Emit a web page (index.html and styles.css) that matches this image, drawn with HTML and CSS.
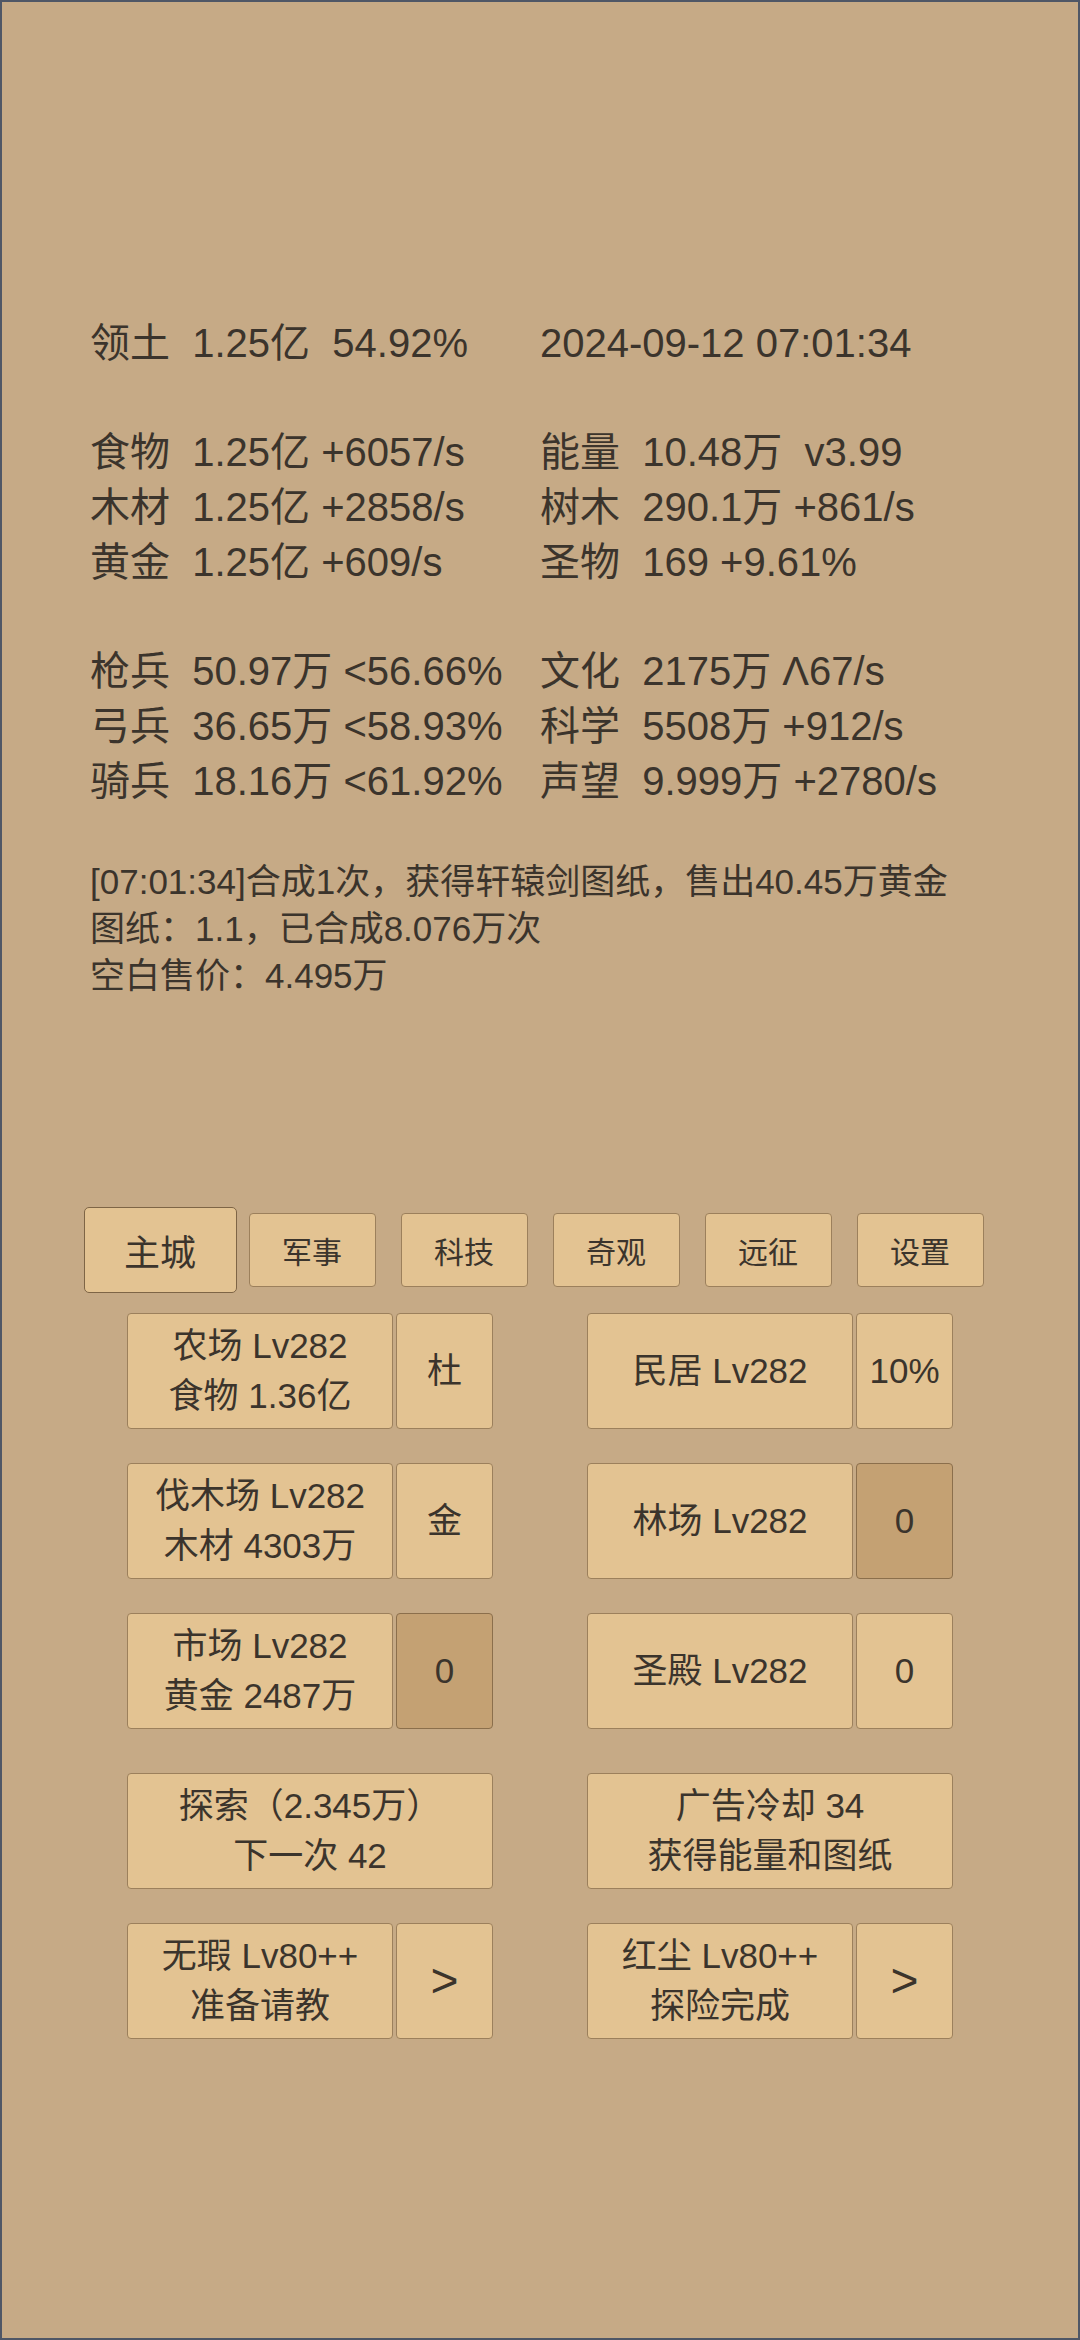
FILE: index.html
```html
<!DOCTYPE html>
<html lang="zh-CN">
<head>
<meta charset="utf-8">
<meta name="viewport" content="width=1080">
<title>主城</title>
<link rel="stylesheet" href="styles.css">
</head>
<body>
<div class="screen">
  <section class="stats">
    <div class="group">
      <div class="line">领土  1.25亿  54.92%</div>
      <div class="line">2024-09-12 07:01:34</div>
    </div>
    <div class="group">
      <div class="line">食物  1.25亿 +6057/s</div>
      <div class="line">能量  10.48万  v3.99</div>
      <div class="line">木材  1.25亿 +2858/s</div>
      <div class="line">树木  290.1万 +861/s</div>
      <div class="line">黄金  1.25亿 +609/s</div>
      <div class="line">圣物  169 +9.61%</div>
    </div>
    <div class="group">
      <div class="line">枪兵  50.97万 &lt;56.66%</div>
      <div class="line">文化  2175万 Λ67/s</div>
      <div class="line">弓兵  36.65万 &lt;58.93%</div>
      <div class="line">科学  5508万 +912/s</div>
      <div class="line">骑兵  18.16万 &lt;61.92%</div>
      <div class="line">声望  9.999万 +2780/s</div>
    </div>
  </section>

  <section class="log">
    <p>[07:01:34]合成1次，获得轩辕剑图纸，售出40.45万黄金</p>
    <p>图纸：1.1，已合成8.076万次</p>
    <p>空白售价：4.495万</p>
  </section>

  <nav class="tabs">
    <div class="tab active">主城</div>
    <div class="tab">军事</div>
    <div class="tab">科技</div>
    <div class="tab">奇观</div>
    <div class="tab">远征</div>
    <div class="tab">设置</div>
  </nav>

  <section class="buildings">
    <div class="pair">
      <div class="btn main">农场 Lv282<br>食物 1.36亿</div>
      <div class="btn side">杜</div>
    </div>
    <div class="pair">
      <div class="btn main">民居 Lv282</div>
      <div class="btn side">10%</div>
    </div>

    <div class="pair">
      <div class="btn main">伐木场 Lv282<br>木材 4303万</div>
      <div class="btn side">金</div>
    </div>
    <div class="pair">
      <div class="btn main">林场 Lv282</div>
      <div class="btn side dark">0</div>
    </div>

    <div class="pair">
      <div class="btn main">市场 Lv282<br>黄金 2487万</div>
      <div class="btn side dark">0</div>
    </div>
    <div class="pair">
      <div class="btn main">圣殿 Lv282</div>
      <div class="btn side">0</div>
    </div>

    <div class="pair wide-row">
      <div class="btn full">探索（2.345万）<br>下一次 42</div>
    </div>
    <div class="pair wide-row">
      <div class="btn full">广告冷却 34<br>获得能量和图纸</div>
    </div>

    <div class="pair">
      <div class="btn main">无瑕 Lv80++<br>准备请教</div>
      <div class="btn side arrow">&gt;</div>
    </div>
    <div class="pair">
      <div class="btn main">红尘 Lv80++<br>探险完成</div>
      <div class="btn side arrow">&gt;</div>
    </div>
  </section>
</div>
</body>
</html>
```

FILE: styles.css
```css
* {
  box-sizing: border-box;
}

html, body {
  margin: 0;
  padding: 0;
}

body {
  background: #c6aa86;
  color: #3b342c;
  font-family: "Liberation Sans", "Noto Sans CJK SC", sans-serif;
}

.screen {
  width: 1080px;
  height: 2340px;
  border: 2px solid #4f5766;
  background: #c6aa86;
  padding-top: 314px;
  overflow: hidden;
}

.stats {
  padding-left: 88px;
}

.group {
  display: grid;
  grid-template-columns: 450px 1fr;
  font-size: 40px;
  line-height: 55px;
}

.group + .group {
  margin-top: 54px;
}

.line {
  white-space: pre;
}

.log {
  margin-top: 49px;
  padding-left: 88px;
  font-size: 35px;
  line-height: 47px;
}

.log p {
  margin: 0;
  white-space: pre;
}

.tabs {
  margin-top: 214px;
  display: flex;
  justify-content: center;
  align-items: center;
  gap: 25px;
}

.tab {
  width: 127px;
  height: 74px;
  display: flex;
  align-items: center;
  justify-content: center;
  background: #e3c392;
  border: 1.5px solid #9c805c;
  border-radius: 4px;
  font-size: 30px;
}

.tab.active {
  width: 153px;
  height: 86px;
  margin: -6px -13px;
  font-size: 36px;
  border-color: #7e6546;
  border-radius: 5px;
}

.buildings {
  margin-top: 26px;
  display: grid;
  grid-template-columns: 366px 366px;
  justify-content: center;
  column-gap: 94px;
  row-gap: 34px;
}

.pair {
  display: flex;
  gap: 3px;
  height: 116px;
}

.wide-row {
  margin-top: 10px;
}

.btn {
  display: flex;
  align-items: center;
  justify-content: center;
  text-align: center;
  background: #e3c392;
  border: 1.5px solid #9c805c;
  border-radius: 4px;
  font-size: 35px;
  line-height: 50px;
}

.btn.main {
  width: 266px;
}

.btn.side {
  width: 97px;
}

.btn.full {
  width: 366px;
}

.btn.dark {
  background: #c4a173;
  border-color: #8b6f4c;
}

.btn.arrow {
  font-size: 48px;
}
```
